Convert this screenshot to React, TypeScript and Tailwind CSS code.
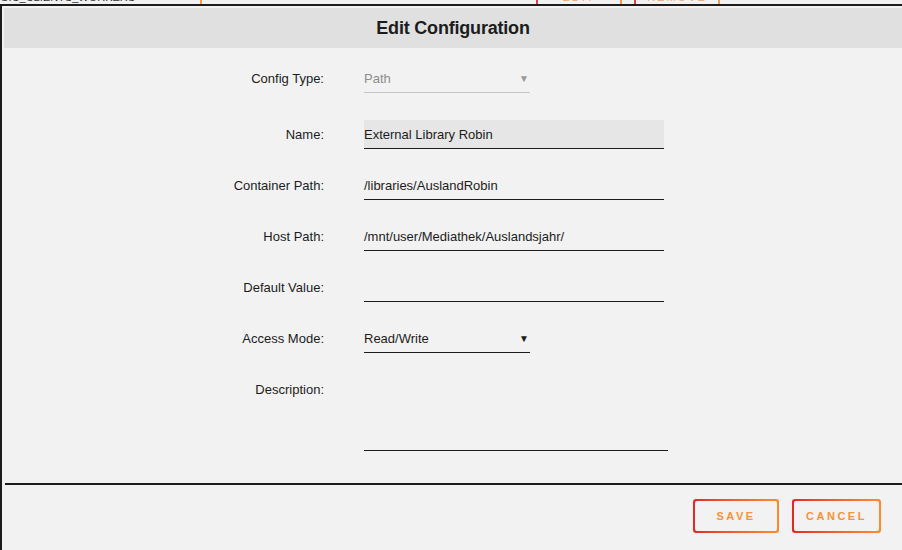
import React from "react";

const labelCls = "h-[29px] w-[320px] shrink-0 text-right text-[13px] leading-[30px]";

function TextRow({ label, value, className = "", boxCls = "" }: { label: string; value: string; className?: string; boxCls?: string }) {
    return (
        <div className={`flex ${className}`}>
            <div className={labelCls}>{label}</div>
            <div className={`ml-[40px] w-[300px] h-[29px] border-b-[1.5px] border-[#1c1c1c] text-[13px] leading-[30px] ${boxCls}`}>
                {value}
            </div>
        </div>
    );
}

function GradientButton({ children, width }: { children: React.ReactNode; width: string }) {
    return (
        <div className={`rounded-[3px] bg-gradient-to-r from-[#e3262c] to-[#ff8a2d] p-[2px] ${width}`}>
            <div className="flex h-[30px] items-center justify-center rounded-[2px] bg-[#f2f2f2] text-[11px] font-bold tracking-[2.5px] text-[#f7923a]">
                {children}
            </div>
        </div>
    );
}

export default function App() {
    return (
        <div className="h-[550px] w-[902px] overflow-hidden bg-[#f2f2f2] font-['Liberation_Sans',sans-serif] text-[#1c1c1c]">
            {/* page behind the dialog, clipped */}
            <div className="h-[4px] overflow-hidden">
                <div className="-mt-[9px] flex h-[13px] items-end text-[11px] leading-[13px]">
                    <div className="w-[200px] text-[#333]">GIC_CLIENTS_WORKERS</div>
                    <div className="h-[13px] w-[2px] bg-[#f39a4c]" />
                    <div className="ml-[334px] flex h-[13px] w-[86px] items-center justify-center border-l-2 border-r-2 border-l-[#d6464a] border-r-[#f39a4c] tracking-[2px] text-[#f0a26a]">
                        EDIT
                    </div>
                    <div className="ml-[12px] flex h-[13px] w-[86px] items-center justify-center border-l-2 border-r-2 border-l-[#d6464a] border-r-[#f39a4c] tracking-[2px] text-[#f0a26a]">
                        REMOVE
                    </div>
                </div>
            </div>

            <div className="h-[546px] border-l-2 border-t-2 border-[#1c1c1c] pl-[2px] pt-[2px]">
                <div className="flex h-[40px] items-center justify-center bg-[#e0e0e0] text-[18px] font-bold tracking-[-0.2px] text-[#1c1c1c]">
                    Edit Configuration
                </div>

                <div className="flex flex-col pt-[16px]">
                    <div className="flex">
                        <div className={labelCls}>Config Type:</div>
                        <div className="ml-[40px] flex h-[29px] w-[166px] items-center justify-between border-b border-[#c6c6c6] pt-[1px] text-[13px] text-[#8c8c8c]">
                            <span>Path</span>
                            <span className="mr-[1px] text-[10px] text-[#999]">▼</span>
                        </div>
                    </div>

                    <TextRow label="Name:" value="External Library Robin" className="mt-[27px]" boxCls="bg-[#e6e6e6]" />
                    <TextRow label="Container Path:" value="/libraries/AuslandRobin" className="mt-[22px]" />
                    <TextRow label="Host Path:" value="/mnt/user/Mediathek/Auslandsjahr/" className="mt-[22px]" />
                    <TextRow label="Default Value:" value="" className="mt-[22px]" />

                    <div className="mt-[22px] flex">
                        <div className={labelCls}>Access Mode:</div>
                        <div className="ml-[40px] flex h-[29px] w-[166px] items-center justify-between border-b-[1.5px] border-[#1c1c1c] pt-[1px] text-[13px]">
                            <span>Read/Write</span>
                            <span className="mr-[1px] text-[10px]">▼</span>
                        </div>
                    </div>

                    <div className="mt-[22px] flex">
                        <div className={labelCls}>Description:</div>
                        <div className="ml-[40px] h-[76px] w-[304px] border-b-[1.5px] border-[#1c1c1c]" />
                    </div>
                </div>

                <div className="ml-[1px] mt-[32px] h-[2px] bg-[#1c1c1c]" />

                <div className="mt-[14px] flex justify-end gap-[13px] pr-[21px]">
                    <GradientButton width="w-[86px]">SAVE</GradientButton>
                    <GradientButton width="w-[89px]">CANCEL</GradientButton>
                </div>
            </div>
        </div>
    );
}
